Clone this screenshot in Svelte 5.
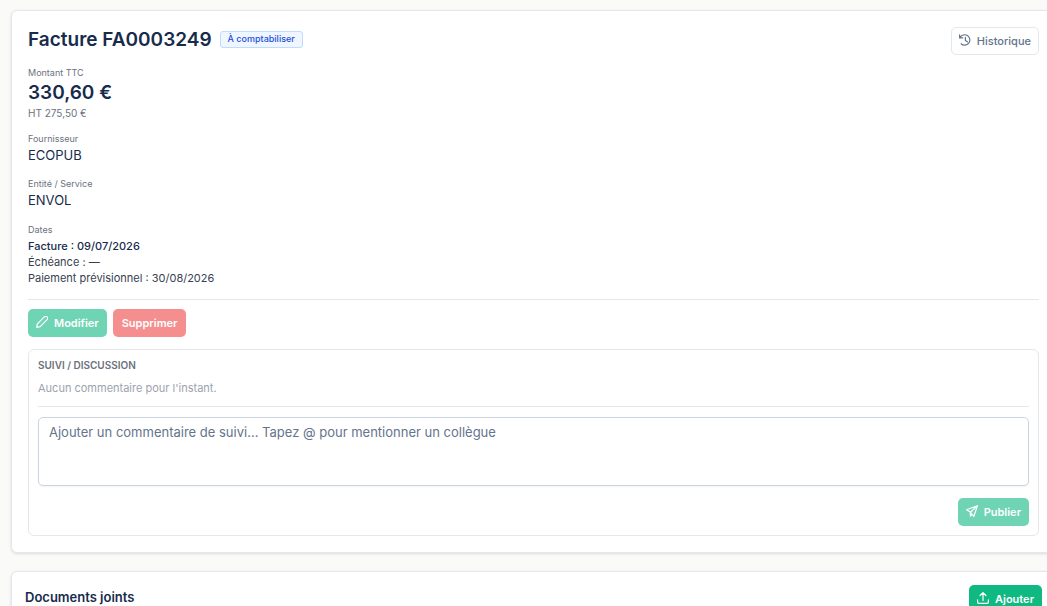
<script>
  const dates = [
    { label: 'Facture', value: '09/07/2026', main: true },
    { label: 'Échéance', value: '—' },
    { label: 'Paiement prévisionnel', value: '30/08/2026' }
  ];
  let comment = $state('');
</script>

<main class="page">
  <section class="card invoice">
    <header class="head">
      <div class="title">
        <h1>Facture FA0003249</h1>
        <span class="badge">À comptabiliser</span>
      </div>
      <button type="button" class="btn outline">
        <svg class="icon" viewBox="1 1 12 12" aria-hidden="true">
          <path d="M1.6 1.8v3.1h3.1M2 4.6a5.2 5.2 0 1 1 1.1 6.2M7.4 4.4v3l2 1.4" />
        </svg>
        <span>Historique</span>
      </button>
    </header>

    <dl class="facts">
      <div>
        <dt>Montant TTC</dt>
        <dd class="amount">330,60 €</dd>
        <dd class="net">HT 275,50 €</dd>
      </div>
      <div>
        <dt>Fournisseur</dt>
        <dd>ECOPUB</dd>
      </div>
      <div>
        <dt>Entité / Service</dt>
        <dd>ENVOL</dd>
      </div>
      <div>
        <dt class="dates-label">Dates</dt>
        {#each dates as d}
          <dd class="date" class:main={d.main}>{d.label} : {d.value}</dd>
        {/each}
      </div>
    </dl>

    <div class="actions">
      <button type="button" class="btn green" disabled>
        <svg class="icon" viewBox="1 1 12 12" aria-hidden="true">
          <path d="M1.7 12.3l.7-3.5 6.9-6.9a1.9 1.9 0 0 1 2.8 2.8l-6.9 6.9z" />
        </svg>
        <span>Modifier</span>
      </button>
      <button type="button" class="btn red" disabled>Supprimer</button>
    </div>

    <section class="thread">
      <h2>Suivi / Discussion</h2>
      <p>Aucun commentaire pour l'instant.</p>
      <div class="compose">
        <textarea
          bind:value={comment}
          aria-label="Commentaire de suivi"
          placeholder="Ajouter un commentaire de suivi... Tapez @ pour mentionner un collègue"
        ></textarea>
        <button type="button" class="btn green" disabled>
          <svg class="icon" viewBox="1 1 12 12" aria-hidden="true">
            <path d="M12.4 1.7L1.6 5.7l3.8 2.6 3.5 4zM12.4 1.7L5.4 8.3v3.8l1.7-1.8" />
          </svg>
          <span>Publier</span>
        </button>
      </div>
    </section>
  </section>

  <section class="card documents">
    <h2>Documents joints</h2>
    <button type="button" class="btn green">
      <svg class="icon" viewBox="1 1 12 12" aria-hidden="true">
        <path d="M7 9.4V1.8M4.1 4.5L7 1.6l2.9 2.9M1.6 8.8v2.3a1.3 1.3 0 0 0 1.3 1.3h8.2a1.3 1.3 0 0 0 1.3-1.3V8.8" />
      </svg>
      <span>Ajouter</span>
    </button>
  </section>
</main>

<style>
  :global(body) {
    margin: 0;
    background: #fafaf9;
  }
  :global(#app) {
    overflow: hidden;
    height: 100vh;
  }
  .page {
    display: flex;
    flex-direction: column;
    gap: 18px;
    padding: 10px 0 0 11px;
    margin-right: -9px;
    font-family: Inter, "Liberation Sans", sans-serif;
    color: #1e293b;
  }
  h1, h2, p, dl, dd {
    margin: 0;
  }
  .card {
    background: #fff;
    border: 1px solid #e5e7eb;
    border-radius: 6px;
    box-shadow: 0 1px 3px rgba(0, 0, 0, 0.12);
  }
  .invoice {
    padding: 16px;
  }
  .head {
    display: flex;
    justify-content: space-between;
    align-items: flex-start;
  }
  .title {
    display: flex;
    align-items: center;
    gap: 8px;
  }
  h1 {
    font-size: 19px;
    line-height: 25px;
    font-weight: 600;
    color: #172b4d;
  }
  .badge {
    padding: 0 7px 1px;
    border: 1px solid #bfdbfe;
    border-radius: 3px;
    background: #eff6ff;
    color: #1d4ed8;
    font-size: 9px;
    line-height: 14px;
    font-weight: 500;
  }
  .btn {
    display: inline-flex;
    align-items: center;
    gap: 6px;
    height: 28px;
    padding: 0 7px;
    border: 1px solid transparent;
    border-radius: 5px;
    font-family: inherit;
    font-size: 11px;
    line-height: 16px;
    font-weight: 600;
    color: #fff;
  }
  .btn:disabled {
    opacity: 0.6;
  }
  .green {
    background: #10b981;
  }
  .red {
    padding: 0 8px;
    background: #ef4444;
  }
  .outline {
    background: #fff;
    border-color: #e2e8f0;
    color: #64748b;
    font-weight: 500;
  }
  .icon {
    width: 12px;
    height: 12px;
    margin-bottom: 3px;
    fill: none;
    stroke: currentColor;
    stroke-width: 1.2;
    stroke-linecap: round;
    stroke-linejoin: round;
  }
  .facts {
    display: flex;
    flex-direction: column;
    gap: 11px;
    margin-top: 10px;
  }
  dt {
    font-size: 9px;
    line-height: 15px;
    color: #6b7280;
  }
  dd {
    font-size: 13px;
    line-height: 19px;
    color: #172b4d;
  }
  .amount {
    font-size: 19px;
    line-height: 26px;
    font-weight: 600;
  }
  .net {
    font-size: 10px;
    line-height: 14px;
    color: #6b7280;
  }
  .dates-label {
    padding: 1px 0;
  }
  .date {
    font-size: 11px;
    line-height: 16px;
    color: #374151;
  }
  .date.main {
    color: #172b4d;
    font-weight: 500;
  }
  .actions {
    display: flex;
    gap: 6px;
    margin-top: 13px;
    padding: 9px 0 12px;
    border-top: 1px solid #e5e7eb;
  }
  .thread {
    padding: 9px;
    border: 1px solid #e5e7eb;
    border-radius: 6px;
  }
  .thread h2 {
    font-size: 10px;
    line-height: 13px;
    font-weight: 600;
    text-transform: uppercase;
    color: #6b7280;
  }
  .thread p {
    margin-top: 8px;
    font-size: 11px;
    line-height: 16px;
    color: #9ca3af;
  }
  .compose {
    display: flex;
    flex-direction: column;
    align-items: flex-end;
    gap: 12px;
    margin-top: 10px;
    padding-top: 10px;
    border-top: 1px solid #e5e7eb;
  }
  textarea {
    box-sizing: border-box;
    width: 100%;
    height: 69px;
    padding: 6px 10px;
    border: 1px solid #cbd5e1;
    border-radius: 5px;
    box-shadow: 0 1px 2px rgba(18, 18, 23, 0.05);
    resize: none;
    font-family: inherit;
    font-size: 13px;
    line-height: 16px;
    color: #334155;
  }
  textarea::placeholder {
    color: #64748b;
  }
  .documents {
    display: flex;
    justify-content: space-between;
    align-items: flex-start;
    padding: 13px;
  }
  .documents h2 {
    font-size: 13px;
    line-height: 24px;
    font-weight: 600;
    color: #172b4d;
  }
</style>
